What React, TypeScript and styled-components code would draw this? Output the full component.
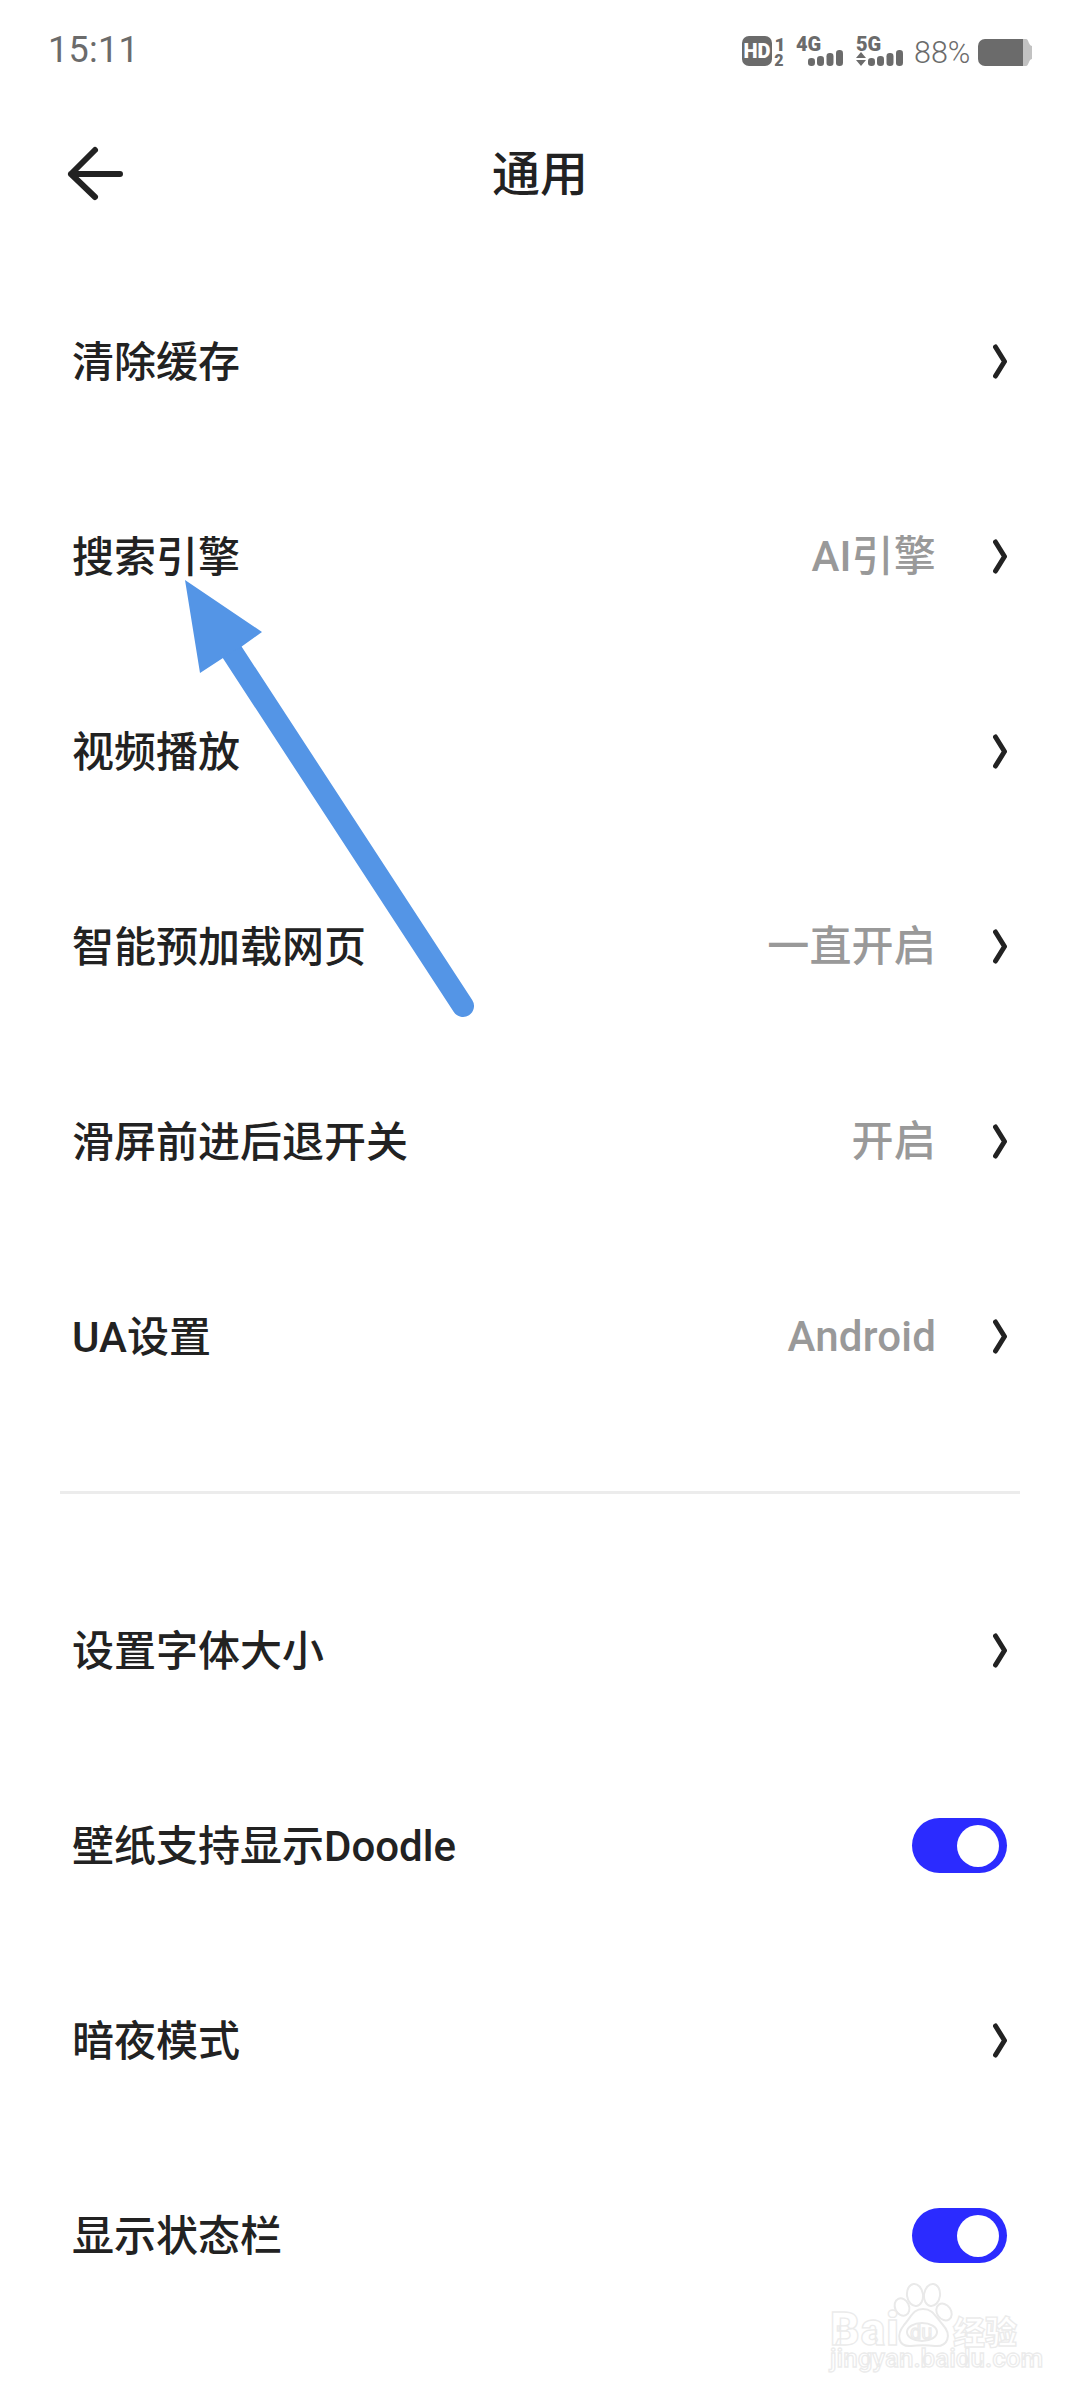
import React from "react";
import styled, { createGlobalStyle } from "styled-components";

const Global = createGlobalStyle`
  html, body { margin: 0; padding: 0; background: #fff; }
  * { box-sizing: border-box; }
`;

const Page = styled.div`
  position: relative;
  width: 1080px;
  height: 2400px;
  overflow: hidden;
  background: #fff;
  color: #222;
  font-family: Roboto, "Noto Sans CJK SC", sans-serif;
`;

const StatusBar = styled.div`
  height: 100px;
  padding: 26px 48px 0 48px;
  display: flex;
  align-items: flex-start;
  justify-content: space-between;
`;

const Time = styled.span`
  font-size: 36px;
  line-height: 48px;
  letter-spacing: 0.3px;
  color: #6b6b6b;
`;

const StatusIcons = styled.svg`
  display: block;
  margin: 0 -8px 0 0;
`;

const NavBar = styled.div`
  position: relative;
  height: 150px;
  display: flex;
  align-items: center;
  justify-content: center;
`;

const BackIcon = styled.svg`
  position: absolute;
  left: 60px;
  top: 45px;
`;

const Title = styled.h1`
  margin: 0;
  font-size: 48px;
  font-weight: 500;
  line-height: 64px;
  color: #222;
`;

const Section = styled.div`
  margin-top: 14px;
`;

const Row = styled.div`
  height: 195px;
  padding: 0 73px 0 72px;
  display: flex;
  align-items: center;
`;

const Label = styled.span`
  flex: 1;
  padding-top: 2px;
  font-size: 42px;
  font-weight: 500;
  line-height: 56px;
  color: #222;
`;

const Value = styled.span`
  margin-right: 57px;
  padding-top: 1px;
  font-size: 42px;
  font-weight: 500;
  line-height: 56px;
  letter-spacing: 0.2px;
  color: #999;
`;

const ChevronIcon = styled.svg`
  display: block;
  flex: none;
`;

const Divider = styled.div`
  height: 3px;
  margin: 57px 60px 59px 60px;
  background: #ececec;
`;

const Toggle = styled.div<{ $on: boolean }>`
  width: 95px;
  height: 55px;
  flex: none;
  padding: 6.5px 8px;
  border-radius: 28px;
  display: flex;
  justify-content: ${(p) => (p.$on ? "flex-end" : "flex-start")};
  background: ${(p) => (p.$on ? "#2b2bff" : "#ccc")};
`;

const Knob = styled.div`
  width: 42px;
  height: 42px;
  border-radius: 50%;
  background: #fff;
`;

const Annotation = styled.svg`
  position: absolute;
  left: 0;
  top: 0;
  pointer-events: none;
`;

const Watermark = styled.svg`
  position: absolute;
  left: 820px;
  top: 2280px;
`;

const Chevron = () => (
  <ChevronIcon width="14" height="36" viewBox="0 0 14 36">
    <path d="M2.5 3 L11.5 17.5 L2.5 32" fill="none" stroke="#222" strokeWidth="5" strokeLinecap="round" strokeLinejoin="round" />
  </ChevronIcon>
);

type Item = { label: string; value?: string; toggle?: boolean };

const first: Item[] = [
  { label: "清除缓存" },
  { label: "搜索引擎", value: "AI引擎" },
  { label: "视频播放" },
  { label: "智能预加载网页", value: "一直开启" },
  { label: "滑屏前进后退开关", value: "开启" },
  { label: "UA设置", value: "Android" },
];

const second: Item[] = [
  { label: "设置字体大小" },
  { label: "壁纸支持显示Doodle", toggle: true },
  { label: "暗夜模式" },
  { label: "显示状态栏", toggle: true },
];

const SettingRow = ({ item }: { item: Item }) => (
  <Row>
    <Label>{item.label}</Label>
    {item.value && <Value>{item.value}</Value>}
    {item.toggle ? (
      <Toggle $on>
        <Knob />
      </Toggle>
    ) : (
      <Chevron />
    )}
  </Row>
);

const Bars = ({ x }: { x: number }) => (
  <g fill="#6b6b6b">
    <rect x={x} y="58" width="7" height="8" rx="3.2" />
    <rect x={x + 9} y="56" width="7" height="10" rx="3.2" />
    <rect x={x + 18.5} y="53" width="7" height="13" rx="3.2" />
    <rect x={x + 28} y="50" width="7" height="16" rx="3.2" />
  </g>
);

const statusFont = { fontFamily: "Roboto, sans-serif", fontWeight: 900 };

const Status = () => (
  <StatusIcons width="300" height="60" viewBox="740 26 300 60">
    <rect x="742" y="36" width="30" height="30" rx="7" fill="#6b6b6b" />
    <text x="757" y="58" textAnchor="middle" fontSize="20" fill="#fff" {...statusFont}>HD</text>
    <text x="780" y="51" textAnchor="middle" fontSize="19" fill="#6b6b6b" {...statusFont}>1</text>
    <text x="779" y="66" textAnchor="middle" fontSize="16" fill="#6b6b6b" {...statusFont}>2</text>
    <text x="796" y="51" fontSize="20" fill="#6b6b6b" {...statusFont}>4G</text>
    <Bars x={808} />
    <text x="856" y="51" fontSize="20" fill="#6b6b6b" {...statusFont}>5G</text>
    <path d="M861 52 L866 58 H856 Z M856 60 H866 L861 66 Z" fill="#6b6b6b" />
    <Bars x={868} />
    <text x="914" y="62.5" fontSize="30.5" fill="#6b6b6b" fontFamily="Roboto, sans-serif" fontWeight={300}>88%</text>
    <path d="M985 39 H1023 V66 H985 A7 7 0 0 1 978 59 V46 A7 7 0 0 1 985 39 Z" fill="#6b6b6b" />
    <path d="M1023 39 H1026 C1029 39 1028 45 1032 46 V59 C1028 60 1029 66 1026 66 H1023 Z" fill="#c2c2c2" />
  </StatusIcons>
);

export default function App() {
  return (
    <Page>
      <Global />
      <StatusBar>
        <Time>15:11</Time>
        <Status />
      </StatusBar>
      <NavBar>
        <BackIcon width="66" height="60" viewBox="0 0 66 60">
          <path d="M35 5 L11 29 L35 52 M11 29 H60" fill="none" stroke="#222" strokeWidth="6" strokeLinecap="round" strokeLinejoin="round" />
        </BackIcon>
        <Title>通用</Title>
      </NavBar>
      <Section>
        {first.map((i) => (
          <SettingRow key={i.label} item={i} />
        ))}
      </Section>
      <Divider />
      {second.map((i) => (
        <SettingRow key={i.label} item={i} />
      ))}
      <Annotation width="1080" height="1100" viewBox="0 0 1080 1100">
        <path d="M232 652 L463 1006" stroke="#5495e6" strokeWidth="22" strokeLinecap="round" fill="none" />
        <path d="M185 580 L262 632 L241 647 L232 652 L223 658 L200 673 Z" fill="#5495e6" />
      </Annotation>
      <Watermark width="230" height="115" viewBox="820 2280 230 115">
        <g fill="none" stroke="#e9e9e9" strokeWidth="2">
          <ellipse cx="915" cy="2295" rx="8" ry="11" transform="rotate(-8 915 2295)" />
          <ellipse cx="932" cy="2295" rx="8" ry="11" transform="rotate(8 932 2295)" />
          <ellipse cx="902" cy="2307" rx="7" ry="9" transform="rotate(-25 902 2307)" />
          <ellipse cx="944" cy="2312" rx="7" ry="9" transform="rotate(-35 944 2312)" />
          <path d="M923 2309 C933 2309 935 2316 943 2325 C952 2335 948 2347 935 2346 C927 2345 919 2345 911 2346 C898 2347 896 2335 904 2325 C912 2316 913 2309 923 2309 Z" />
          <ellipse cx="922" cy="2332" rx="15" ry="9" />
        </g>
        <g fontFamily="Roboto, sans-serif" fill="#fff" stroke="#ebebeb" strokeWidth="1.3">
          <text x="830" y="2345" fontSize="46" fontWeight={900} letterSpacing="1">Bai</text>
          <text x="910" y="2339" fontSize="20" fontWeight={400}>du</text>
          <text x="953" y="2344" fontSize="32" fontWeight={900} fontFamily="'Noto Sans CJK SC', sans-serif">经验</text>
          <text x="830" y="2367" fontSize="26" fontWeight={500}>jingyan.baidu.com</text>
        </g>
      </Watermark>
    </Page>
  );
}
